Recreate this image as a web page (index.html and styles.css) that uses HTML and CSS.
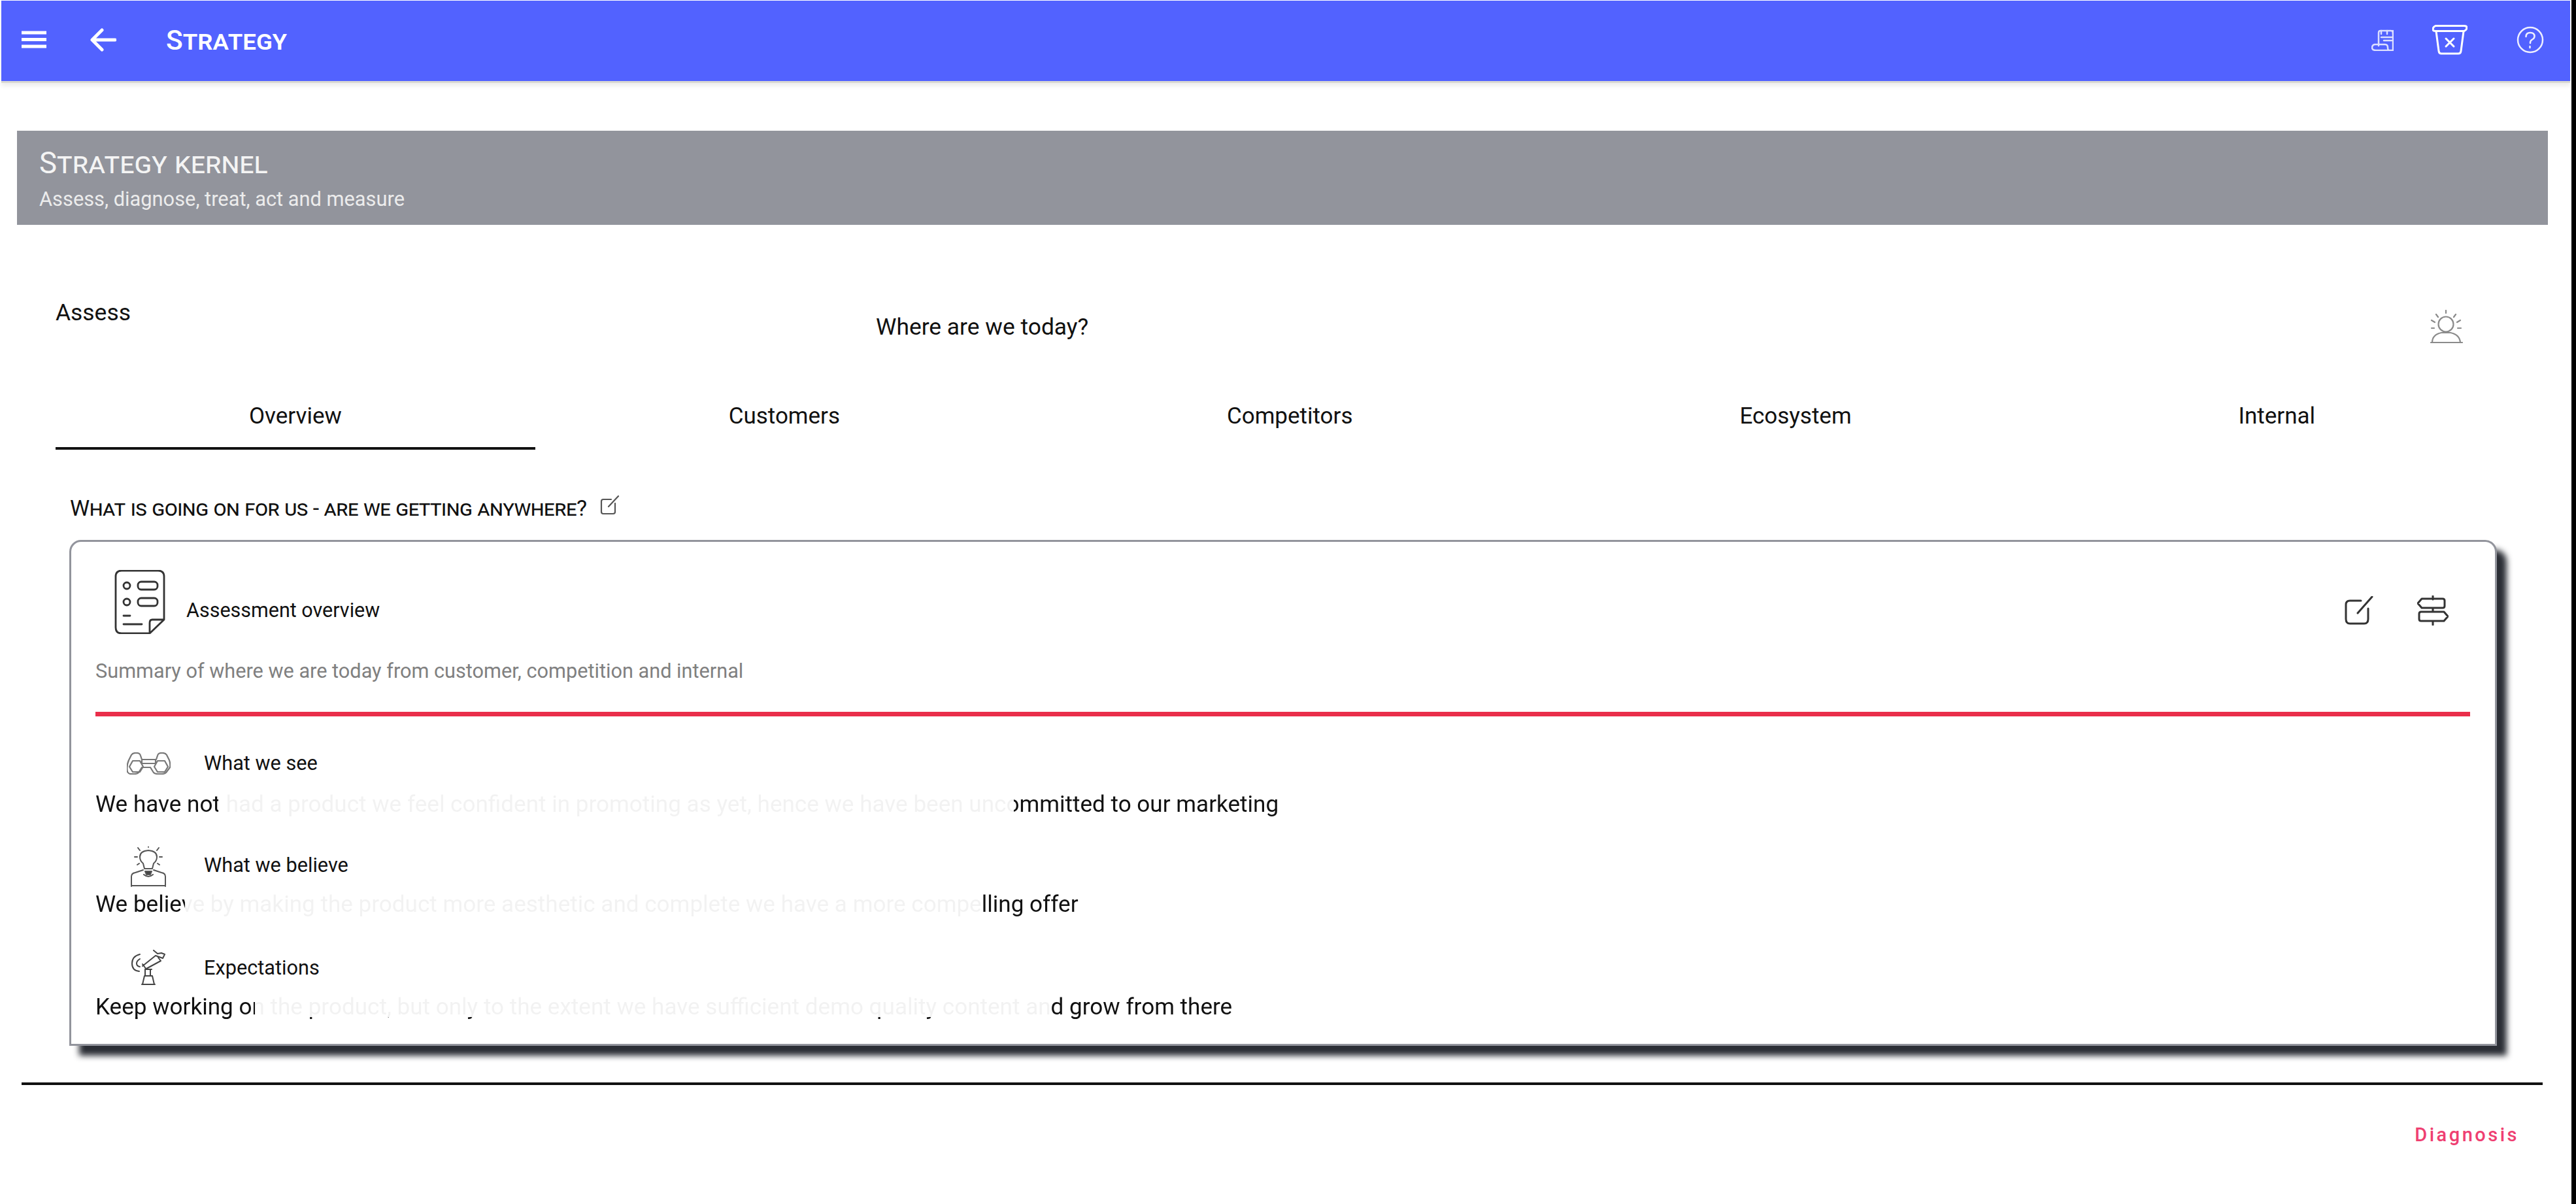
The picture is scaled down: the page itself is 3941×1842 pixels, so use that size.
FILE: index.html
```html
<!DOCTYPE html>
<html lang="en">
<head>
<meta charset="utf-8">
<title>Strategy</title>
<link rel="stylesheet" href="styles.css">
</head>
<body>
<div class="page">
  <header class="appbar">
    <svg class="ic-menu" viewBox="0 0 40 27"><path d="M1 3h38M1 13.500h38M1 24h38"/></svg>
    <svg class="ic-back" viewBox="0 0 40 36"><path d="M38 18H4M18 3L3 18l15 15"/></svg>
    <h1 class="app-title">Strategy</h1>
    <div class="app-actions">
      <svg class="ic-scroll" viewBox="0 0 34 34"><path d="M11 26V6q0-3 3-3h16q3 0 3 3v27H7q-6 0-6-4t4-5h16q4 0 4 5t4 4"/><path d="M15 3v5M24 3v5M33 3v5M15 13h18M19 18h12" /></svg>
      <svg class="ic-trash" viewBox="0 0 54 46"><path d="M5 1.500h44q4 0 4 3t-4 5H5q-4 0-4-3t4-5z"/><path d="M6 10l4 30q.5 4 4 4h26q3.500 0 4-4l4-30M21 21l12 12M33 21L21 33"/></svg>
      <svg class="ic-help" viewBox="0 0 42 42"><circle cx="21" cy="21" r="19"/><path d="M14.500 16q0-6 6.500-6t6.500 5.500q0 3-3.500 5t-3 5.500M20.500 31v2"/></svg>
    </div>
  </header>

  <section class="banner">
    <h2 class="banner-title">Strategy kernel</h2>
    <p class="banner-sub">Assess, diagnose, treat, act and measure</p>
  </section>

  <main class="assess">
    <div class="assess-head">
      <div class="assess-name">Assess</div>
      <div class="assess-question">Where are we today?</div>
      <svg class="ic-sun" viewBox="0 0 50 52"><circle cx="24" cy="22" r="11.500"/><path d="M24 1v4M9 7l3 4M39 7l-3 4M2 16l5 3M46 16l-5 3M2 28h4M42 28h5M1 50h48M3 50q0-12 14-15h14q14 3 15 15"/></svg>
    </div>

    <nav class="tabs">
      <div class="tab tab-active">Overview</div>
      <div class="tab">Customers</div>
      <div class="tab">Competitors</div>
      <div class="tab">Ecosystem</div>
      <div class="tab">Internal</div>
    </nav>

    <div class="prompt">
      <span class="prompt-text">What is going on for us - are we getting anywhere?</span>
      <svg class="ic-prompt" viewBox="0 0 30 30"><path d="M17 6H5q-3 0-3 3v16q0 3 3 3h15q3 0 3-3V12M13 17L28 1"/></svg>
    </div>

    <article class="card">
      <div class="card-head">
        <svg class="ic-doc" viewBox="0 0 78 98"><path d="M76 76V10q0-9-9-9H11q-9 0-9 9v78q0 9 9 9h43zM76 76H58q-4 0-4 5v16"/><circle cx="19" cy="24" r="5"/><circle cx="19" cy="49" r="5"/><rect x="36" y="18" width="30" height="12" rx="5"/><rect x="36" y="43" width="30" height="12" rx="5"/><path d="M14 70h10M14 83h28"/></svg>
        <h3 class="card-title">Assessment overview</h3>
        <div class="card-actions">
          <svg class="ic-edit" viewBox="0 0 44 44"><path d="M25 7H8q-6 0-6 6v22q0 7 6 7h22q6 0 6-7V19M20 26L42 1"/></svg>
          <svg class="ic-sign" viewBox="0 0 48 46"><path d="M24 1v5M24 19v6M24 39v6M7 5h32q3 0 3 3v8q0 3-3 3H7l-6-7zM6 25h35l6 7-6 7H6q-3 0-3-3V28q0-3 3-3z"/></svg>
        </div>
      </div>
      <p class="card-sub">Summary of where we are today from customer, competition and internal</p>
      <div class="card-rule"></div>

      <div class="row row-see">
        <div class="row-head">
          <div class="row-icon"><svg class="ic-bino" viewBox="0 0 67 34"><path d="M3 12l4-8q2-3 6-3h2q5 0 6 4l2 6h22l2-6q1-4 6-4h2q4 0 6 3l4 8q2 6 1 11l-6 8q-2 2-6 2h-7q-4 0-6-2l-5-8H23l-5 8q-2 2-6 2H6q-3 0-5-3-2-9 2-18zM23 11v6h21v-6"/><path d="M9 13h11l5 9-5 8H9l-5-8zM47 13h11l5 9-5 8H47l-5-8z"/></svg></div>
          <h4 class="row-label">What we see</h4>
        </div>
        <p class="row-text text-see">We have not had a product we feel confident in promoting as yet, hence we have been uncommitted to our marketing</p>
      </div>

      <div class="row row-believe">
        <div class="row-head">
          <div class="row-icon"><svg class="ic-bulb" viewBox="0 0 54 62"><path d="M19 26q-5-4-5-10 0-9 13-10 13 1 13 10 0 6-5 10l-2 8H21z"/><path d="M22 38h10l-2 5h-6z" class="fill"/><path d="M27 0v1M11 2l3 4M43 2l-3 4M6 16h4M44 16h4M10 28l3-2M44 28l-3-2M1 61V46q0-5 6-6l12-4M53 61V46q0-5-6-6l-12-4M20 43q7 6 14 0M1 60h52"/></svg></div>
          <h4 class="row-label">What we believe</h4>
        </div>
        <p class="row-text text-believe">We believe by making the product more aesthetic and complete we have a more compelling offer</p>
      </div>

      <div class="row row-expect">
        <div class="row-head">
          <div class="row-icon"><svg class="ic-scope" viewBox="0 0 54 56"><path d="M14 7Q2 10 2 21t11 12M14 14q-5 3-5 7t5 5"/><path d="M18 25L38 9l11 4 3-6-5-2-6 1-6-5M22 30l24-13-4-5M18 22l6 8h8"/><path d="M22 30h8v10h-8zM21 40l-3 13h18l-3-13zM17 53h20"/></svg></div>
          <h4 class="row-label">Expectations</h4>
        </div>
        <p class="row-text text-expect">Keep working on the product, but only to the extent we have sufficient demo quality content and grow from there</p>
      </div>
    </article>
  </main>

  <hr class="foot-rule">
  <div class="foot"><span class="next">Diagnosis</span></div>
</div>
</body>
</html>
```
FILE: styles.css
```css
* { box-sizing: border-box; }
html, body { margin: 0; padding: 0; background: #fff; }
body { font-family: Roboto, "Liberation Sans", sans-serif; color: #111; }
h1, h2, h3, h4, p { margin: 0; font-weight: 400; }
svg { display: block; fill: none; stroke-linecap: round; stroke-linejoin: round; }

.page {
  display: flex;
  flex-direction: column;
  width: 3941px;
  height: 1842px;
  padding: 1px 2px 0 2px;
  border-right: 7px solid #000;
  overflow: hidden;
}

/* App bar */
.appbar {
  display: flex;
  align-items: center;
  flex: none;
  height: 123px;
  padding: 0 40px 4px 30px;
  background: #5262ff;
  color: #fff;
  box-shadow: 0 3px 0 #d9d9d2, 0 8px 6px rgba(0, 0, 0, .07);
}
.appbar svg { stroke: #fff; }
.ic-menu { width: 40px; height: 27px; stroke-width: 5; stroke-linecap: butt; }
.ic-back { width: 40px; height: 36px; margin-left: 66px; stroke-width: 5; }
.app-title {
  margin: 2px 0 0 76px;
  font-size: 42.500px;
  line-height: 50px;
  font-variant: small-caps;
  font-weight: 500;
}
.app-actions { display: flex; align-items: center; margin-left: auto; }
.ic-scroll { width: 34px; height: 34px; stroke-width: 2.500; opacity: .8; }
.ic-trash { width: 54px; height: 46px; margin-left: 59px; stroke-width: 3; }
.ic-help { width: 42px; height: 42px; margin-left: 75px; stroke-width: 2.500; opacity: .9; }

/* Banner */
.banner {
  display: flex;
  flex-direction: column;
  justify-content: center;
  flex: none;
  height: 144px;
  margin: 76px 34px 0 24px;
  padding: 4px 0 0 34px;
  background: #92949c;
  color: #f4f4f4;
}
.banner-title { font-size: 45.600px; line-height: 52px; font-variant: small-caps; }
.banner-sub { font-size: 30.800px; line-height: 38px; margin-top: 10px; color: #ececec; }

/* Assess section */
.assess { flex: none; margin: 114px 94px 0 83px; }
.assess-head { display: flex; align-items: flex-start; height: 70px; }
.assess-name { width: 1255px; font-size: 35.400px; line-height: 40px; }
.assess-question { flex: 1; padding-top: 22px; font-size: 35.400px; line-height: 40px; }
.ic-sun { width: 50px; height: 52px; margin: 16px 70px 0 0; stroke: #8b8b8b; stroke-width: 2.200; }

.tabs { display: flex; margin-top: 64px; }
.tab {
  flex: 1 1 auto;
  height: 96px;
  padding-top: 25px;
  font-size: 35px;
  line-height: 40px;
  text-align: center;
  border-bottom: 4px solid transparent;
}
.tab-active { border-bottom-color: #111; }

.prompt { display: flex; align-items: center; height: 50px; margin-top: 64px; padding-left: 22px; }
.prompt-text { font-size: 34px; line-height: 50px; font-variant: small-caps; letter-spacing: -.5px; }
.ic-prompt { width: 30px; height: 30px; margin: -8px 0 0 20px; stroke: #555; stroke-width: 2.200; }

/* Card */
.card {
  height: 774px;
  margin: 24px 18px 0 21px;
  padding: 43px 38px 0 37px;
  background: #fff;
  border: 3px solid #92949c;
  border-radius: 18px 18px 0 0;
  box-shadow: 15px 15px 10px #2b2e35;
}
.card-head { display: flex; align-items: center; height: 98px; padding-left: 29px; }
.ic-doc { width: 78px; height: 98px; flex: none; stroke: #333; stroke-width: 2.800; }
.card-title { margin: 26px 0 0 32px; font-size: 30.500px; line-height: 36px; }
.card-actions { display: flex; align-items: center; margin: 26px 33px 0 auto; }
.ic-edit { width: 44px; height: 44px; stroke: #333; stroke-width: 3; }
.ic-sign { width: 48px; height: 46px; margin-left: 67px; stroke: #333; stroke-width: 3; }
.card-sub { margin-top: 39px; font-size: 30.700px; line-height: 36px; color: #808080; }
.card-rule { height: 7px; margin-top: 44px; background: #ea2e4a; }

.row-head { display: flex; align-items: center; height: 66px; }
.row-icon { display: flex; justify-content: center; width: 162px; margin-right: 4px; }
.row-label { font-size: 30.700px; line-height: 36px; }
.row-see { margin-top: 39px; }
.row-see .row-text { margin-top: 7px; }
.row-believe { margin-top: 41px; }
.row-believe .row-label { margin-top: -4px; }
.row-believe .row-text { margin-top: 2px; }
.row-expect { margin-top: 43px; }
.row-expect .row-text { margin-top: 4px; }

.ic-bino { width: 67px; height: 34px; stroke: #777; stroke-width: 2.200; }
.ic-bulb { width: 54px; height: 62px; stroke: #555; stroke-width: 2; }
.ic-bulb .fill { fill: #444; }
.ic-scope { width: 54px; height: 56px; stroke: #444; stroke-width: 2; }

/* Body lines: the middle of each line is almost washed out, as in the capture */
.row-text {
  width: 3000px;
  font-size: 35.100px;
  line-height: 44px;
  color: transparent;
  white-space: nowrap;
  -webkit-background-clip: text;
  background-clip: text;
}
.text-see {
  background-image: linear-gradient(to right, #111 188px, #f2f2f2 188px, #f2f2f2 1405px, #111 1405px);
}
.text-believe {
  background-image:
    linear-gradient(to bottom, #111 7px, transparent 7px),
    linear-gradient(to right, #111 137px, #f2f2f2 137px, #f2f2f2 1357px, #111 1357px);
}
.text-expect {
  background-image:
    linear-gradient(to bottom, transparent 38px, #111 38px),
    linear-gradient(to right, #111 244px, #f2f2f2 244px, #f2f2f2 1463px, #111 1463px);
}

/* Footer */
.foot-rule { flex: none; height: 4px; margin: 56px 42px 0 31px; border: 0; background: #111; }
.foot { display: flex; justify-content: flex-end; margin-top: 58px; padding-right: 78px; }
.next { font-size: 29px; line-height: 36px; font-weight: 500; letter-spacing: 3.500px; color: #ef3f72; }
```
